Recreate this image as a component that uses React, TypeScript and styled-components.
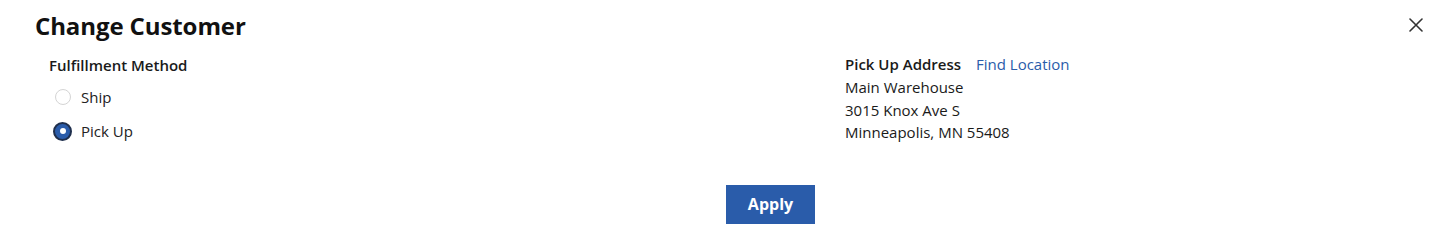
import React, { useState } from 'react';
import styled, { createGlobalStyle } from 'styled-components';

const GlobalStyle = createGlobalStyle`
  html, body {
    margin: 0;
    padding: 0;
    background: #ffffff;
    font-family: 'Open Sans', 'Liberation Sans', sans-serif;
    color: #1a1a1a;
  }
`;

const Modal = styled.div`
  width: 1441px;
  height: 228px;
  box-sizing: border-box;
  background: #fff;
`;

const Header = styled.div`
  display: flex;
  align-items: center;
  justify-content: space-between;
  height: 50px;
  padding: 0 13px 0 35px;
`;

const Title = styled.h2`
  margin: 0;
  font-size: 24px;
  font-weight: 700;
  color: #111;
  letter-spacing: -0.1px;
`;

const CloseButton = styled.button`
  width: 24px;
  height: 24px;
  padding: 0;
  border: none;
  background: none;
  display: flex;
  align-items: center;
  justify-content: center;
  cursor: pointer;
`;

const Body = styled.div`
  display: grid;
  grid-template-columns: 796px 1fr;
  padding-left: 49px;
`;

const Column = styled.div`
  display: flex;
  flex-direction: column;
`;

const Label = styled.div`
  font-size: 15px;
  font-weight: 600;
  line-height: 22px;
  color: #1a1a1a;
`;

const RadioList = styled.div`
  display: flex;
  flex-direction: column;
  gap: 12px;
  margin-top: 10px;
  padding-left: 4px;
`;

const RadioRow = styled.label`
  display: flex;
  align-items: center;
  gap: 9px;
  height: 22px;
  font-size: 15px;
  color: #222;
  cursor: pointer;
`;

const RadioCircle = styled.span<{ $checked: boolean }>`
  box-sizing: border-box;
  width: ${p => (p.$checked ? '19px' : '16px')};
  height: ${p => (p.$checked ? '19px' : '16px')};
  margin-left: ${p => (p.$checked ? '0' : '1.5px')};
  margin-right: ${p => (p.$checked ? '0' : '1.5px')};
  border-radius: 50%;
  border: ${p => (p.$checked ? '2.5px solid #1f2f4d' : '1px solid #d4d4d4')};
  background: ${p => (p.$checked ? '#2a5caa' : '#fff')};
  display: flex;
  align-items: center;
  justify-content: center;

  &::after {
    content: '';
    display: ${p => (p.$checked ? 'block' : 'none')};
    width: 6px;
    height: 6px;
    border-radius: 50%;
    background: #fff;
  }
`;

const LabelRow = styled.div`
  display: flex;
  align-items: center;
  gap: 15px;
  margin-top: 3px;
`;

const Link = styled.a`
  font-size: 15px;
  line-height: 22px;
  color: #2a5caa;
  text-decoration: none;
  cursor: pointer;
`;

const AddressLine = styled.div`
  font-size: 15px;
  line-height: 22.5px;
  color: #1a1a1a;
`;

const Address = styled.div`
  margin-top: 1px;
`;

const Footer = styled.div`
  display: flex;
  justify-content: center;
  padding-left: 100px;
  margin-top: 41px;
`;

const ApplyButton = styled.button`
  width: 89px;
  height: 39px;
  border: none;
  background: #2a5caa;
  color: #fff;
  font-family: 'Open Sans', 'Liberation Sans', sans-serif;
  font-size: 16px;
  font-weight: 700;
  cursor: pointer;
`;

const options = ['Ship', 'Pick Up'];

export default function App() {
  const [method, setMethod] = useState('Pick Up');

  return (
    <Modal>
      <GlobalStyle />
      <Header>
        <Title>Change Customer</Title>
        <CloseButton aria-label="Close">
          <svg width="14" height="14" viewBox="0 0 14 14">
            <path d="M1 1 L13 13 M13 1 L1 13" stroke="#333" strokeWidth="1.6" strokeLinecap="round" />
          </svg>
        </CloseButton>
      </Header>
      <Body>
        <Column>
          <Label style={{ marginTop: 4 }}>Fulfillment Method</Label>
          <RadioList>
            {options.map(o => (
              <RadioRow key={o} onClick={() => setMethod(o)}>
                <RadioCircle $checked={method === o} />
                {o}
              </RadioRow>
            ))}
          </RadioList>
        </Column>
        <Column>
          <LabelRow>
            <Label>Pick Up Address</Label>
            <Link>Find Location</Link>
          </LabelRow>
          <Address>
            <AddressLine>Main Warehouse</AddressLine>
            <AddressLine>3015 Knox Ave S</AddressLine>
            <AddressLine>Minneapolis, MN 55408</AddressLine>
          </Address>
        </Column>
      </Body>
      <Footer>
        <ApplyButton>Apply</ApplyButton>
      </Footer>
    </Modal>
  );
}
